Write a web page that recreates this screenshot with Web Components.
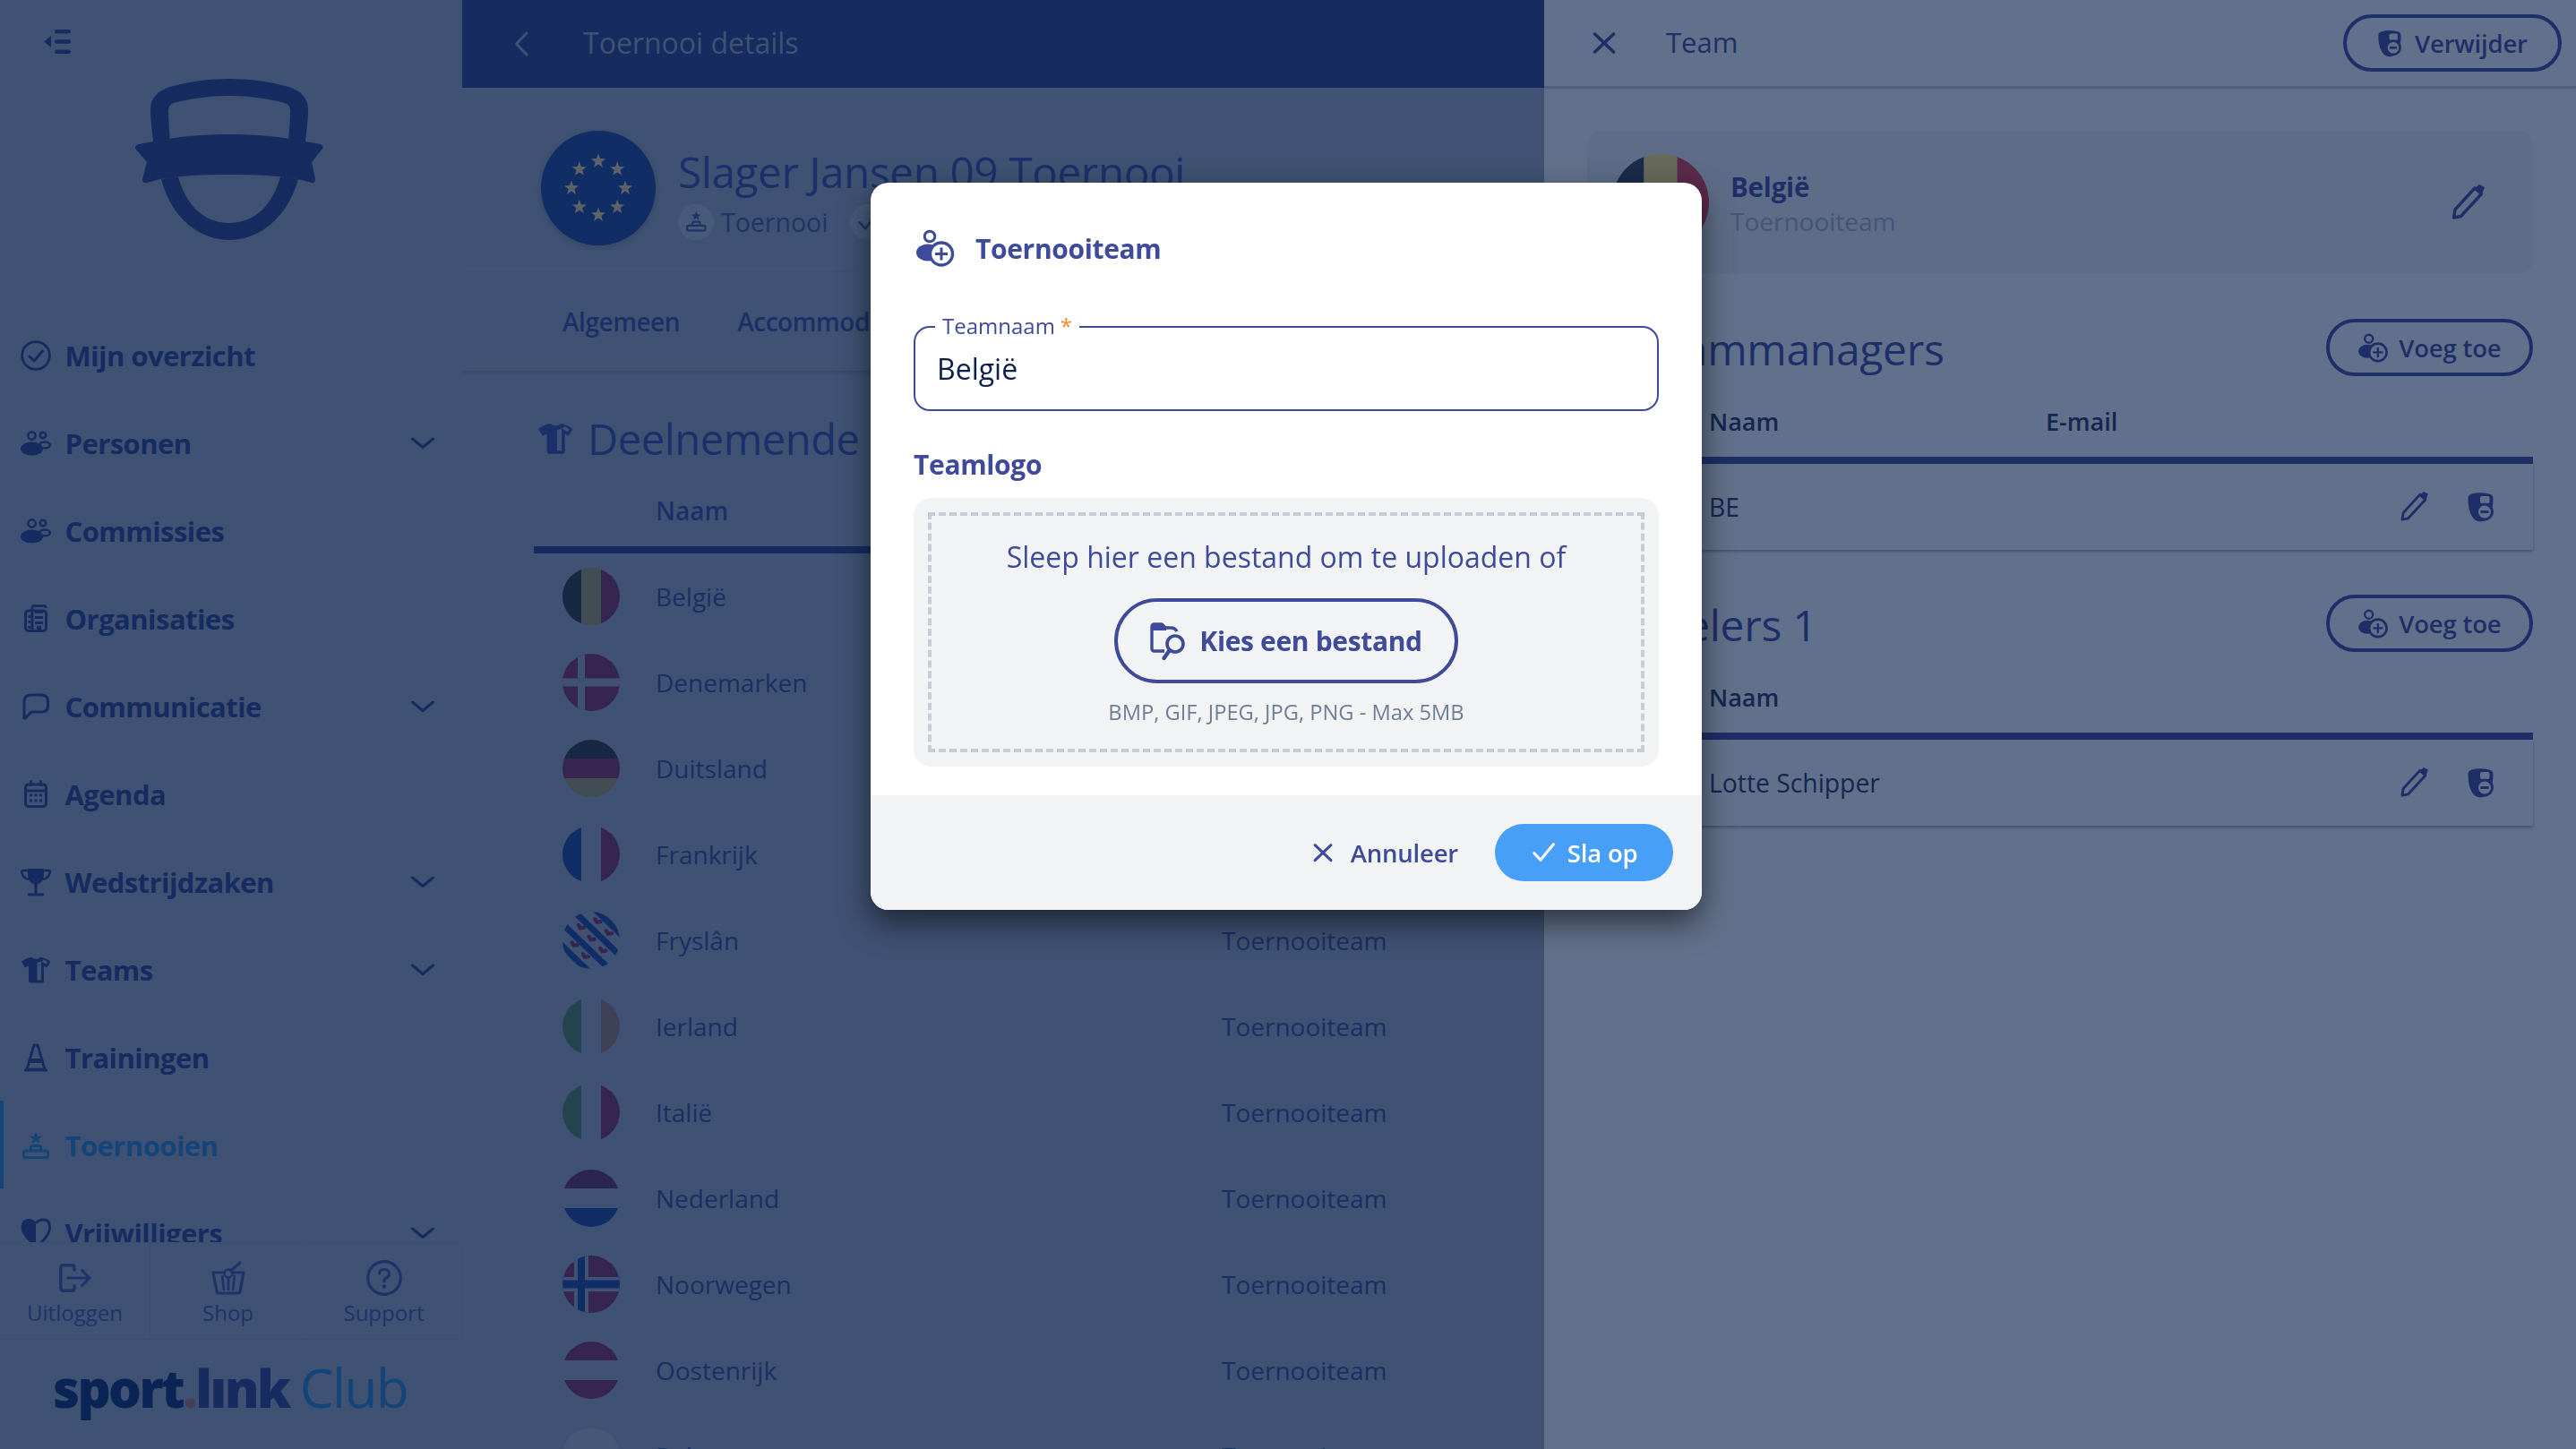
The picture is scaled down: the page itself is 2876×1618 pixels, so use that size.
<!DOCTYPE html>
<html lang="nl"><head><meta charset="utf-8"><title>Sportlink Club</title>
<style>
html,body{margin:0;padding:0;width:2876px;height:1618px;overflow:hidden;background:#3f5273;font-family:"Open Sans","Noto Sans",sans-serif}
</style></head><body>
<app-shell>
  <side-nav slot="nav"></side-nav>
  <tournament-panel slot="main"></tournament-panel>
  <team-panel slot="side"></team-panel>
</app-shell>
<team-modal></team-modal>
<script>
const ICONS={
collapse:[30,27,'<path d="M0 13.5 8 7v13z" fill="currentColor"/><g fill="currentColor"><rect x="12" y="0" width="18" height="4.4" rx="2"/><rect x="12" y="11.3" width="18" height="4.4" rx="2"/><rect x="12" y="22.6" width="18" height="4.4" rx="2"/></g>'],
check:[34,34,'<circle cx="17" cy="17" r="15.4" fill="none" stroke="currentColor" stroke-width="2.8"/><path d="M10 18l5 5 9.500-11" fill="none" stroke="currentColor" stroke-width="3" stroke-linecap="round" stroke-linejoin="round"/>'],
people:[34,28,'<g fill="none" stroke="currentColor" stroke-width="2.400"><circle cx="12.500" cy="5.500" r="4.200"/><circle cx="25" cy="5" r="3.300"/><ellipse cx="27" cy="16" rx="5.800" ry="3.400"/></g><ellipse cx="12.500" cy="20" rx="12.500" ry="7.500" fill="currentColor"/>'],
building:[26,31,'<rect x="1.500" y="7" width="23" height="22.500" rx="3.500" fill="none" stroke="currentColor" stroke-width="3"/><path d="M9 29V3.500Q9 1.500 11 1.500H22Q24 1.500 24 4" fill="none" stroke="currentColor" stroke-width="3"/><g fill="currentColor"><rect x="4.500" y="12" width="3" height="3"/><rect x="4.500" y="18" width="3" height="3"/><rect x="4.500" y="24" width="3" height="3"/><rect x="12" y="7" width="9" height="3"/><rect x="12" y="13" width="9" height="3"/><rect x="12" y="19" width="9" height="3"/><rect x="14" y="24" width="5" height="5"/></g>'],
chat:[30,30,'<path d="M2 28V9.500Q2 2 10 2H21Q28.500 2 28.500 9.500V14.500Q28.500 21 21 21H10L3 28z" fill="none" stroke="currentColor" stroke-width="3" stroke-linejoin="round"/>'],
calendar:[26,31,'<rect x="1.500" y="5" width="23" height="24.500" rx="3.500" fill="none" stroke="currentColor" stroke-width="3"/><path d="M1.500 12H24.500" stroke="currentColor" stroke-width="3"/><g fill="currentColor"><rect x="6" y="0" width="3" height="7" rx="1.500"/><rect x="17" y="0" width="3" height="7" rx="1.500"/><rect x="6" y="15.500" width="3" height="3"/><rect x="11.500" y="15.500" width="3" height="3"/><rect x="17" y="15.500" width="3" height="3"/><rect x="6" y="21.500" width="3" height="3"/><rect x="11.500" y="21.500" width="3" height="3"/><rect x="17" y="21.500" width="3" height="3"/></g>'],
trophy:[34,32,'<path d="M8 1H26V8Q26 17 17 19Q8 17 8 8Z" fill="currentColor"/><path d="M8 3H2Q1 3 1.500 6Q3 12 9.500 13M26 3H32Q33 3 32.500 6Q31 12 24.500 13" fill="none" stroke="currentColor" stroke-width="2.600"/><rect x="15.300" y="18" width="3.400" height="11" fill="currentColor"/><rect x="8" y="28.500" width="18" height="3" rx="1" fill="currentColor"/>'],
shirt:[34,30,'<path fill-rule="evenodd" d="M1 6Q7 1 12.500 1Q17 5 22 1Q27 1 33.500 6L29.500 12.500L26 10.500V27Q26 29.500 24 29.500H11Q9 29.500 9 27V10.500L5 12.500ZM18.500 6.500V26.500H23V6Q25 5 25.500 3.500Q28 4 30 6.500L28.500 8.500L23 5.500Q21 6.500 18.500 6.500Z" fill="currentColor"/>'],
cone:[26,31,'<path d="M0 30H26" stroke="currentColor" stroke-width="2.600"/><path d="M11 2H15L23 29H3Z" fill="none" stroke="currentColor" stroke-width="2.800" stroke-linejoin="round"/><path d="M7 17H19V22H6Z" fill="currentColor"/>'],
podium:[30,30,'<path d="M15 0l2 4.500 4.800.400-3.600 3.200 1.100 4.700L15 10.300l-4.300 2.500 1.100-4.700L8.200 4.900l4.800-.400z" fill="currentColor"/><path d="M9.500 21V17.500Q9.500 15.500 11.500 15.500H18.500Q20.500 15.500 20.500 17.500V21M3.500 21H26.500Q28.500 21 28.500 23V26.500Q28.500 28.500 26.500 28.500H3.500Q1.500 28.500 1.500 26.500V23Q1.500 21 3.500 21Z" fill="none" stroke="currentColor" stroke-width="3"/>'],
heart:[34,34,'<path d="M17 33Q1 20 .500 11Q.500 1 9 1Q14 1 17 5Z" fill="currentColor"/><path d="M17 33Q32.500 20 32.500 11Q33 2 25 2Q20 2 17 6" fill="none" stroke="currentColor" stroke-width="2.800"/>'],
chev:[26,14,'<path d="M1.500 2 13 11.500 24.500 2" fill="none" stroke="currentColor" stroke-width="3" stroke-linecap="round" stroke-linejoin="round"/>'],
logout:[36,32,'<path d="M17 7V4.500Q17 1.700 14 1.700H5Q1.800 1.700 1.800 5V27Q1.800 30.300 5 30.300H14Q17 30.300 17 27.500V25" fill="none" stroke="currentColor" stroke-width="3.400" stroke-linecap="round"/><path d="M10 16H33M25.500 7.500 34 16 25.500 24.500" fill="none" stroke="currentColor" stroke-width="3" stroke-linecap="round" stroke-linejoin="round"/>'],
basket:[38,36,'<path d="M2 12H36L32 33Q31.500 35 29.500 35H8.500Q6.500 35 6 33Z" fill="none" stroke="currentColor" stroke-width="3.200" stroke-linejoin="round"/><path d="M12 15 14 32M19 15V32M26 15 24 32" stroke="currentColor" stroke-width="2.600"/><circle cx="19" cy="13" r="4.500" fill="#3f5273" stroke="currentColor" stroke-width="2.600"/><path d="M21.500 10 32 1" stroke="currentColor" stroke-width="3.400" stroke-linecap="round"/>'],
help:[40,40,'<circle cx="20" cy="20" r="18.300" fill="none" stroke="currentColor" stroke-width="3.200"/><path d="M14.500 15Q15 10.500 20 10.500Q25.500 10.500 25.500 15.500Q25.500 18.500 22 20Q20 21 20 24" fill="none" stroke="currentColor" stroke-width="3.200" stroke-linecap="round"/><circle cx="20" cy="29.500" r="2.200" fill="currentColor"/>'],
back:[16,28,'<path d="M14 2 2.500 14 14 26" fill="none" stroke="currentColor" stroke-width="3" stroke-linecap="round" stroke-linejoin="round"/>'],
close:[26,24,'<path d="M2.500 2 23.500 22M23.500 2 2.500 22" fill="none" stroke="currentColor" stroke-width="3.600" stroke-linecap="round"/>'],
tick:[28,24,'<path d="M2 13 10 21.500 26 2" fill="none" stroke="currentColor" stroke-width="3.400" stroke-linecap="round" stroke-linejoin="round"/>'],
pencil:[40,40,'<path d="M3.500 37 5 28 27 4 34.500 10.500 11.500 35.500Z" fill="none" stroke="currentColor" stroke-width="3.400" stroke-linejoin="round"/><path d="M26 5 32 0 38 3 35 11Z" fill="currentColor"/>'],
add:[42,42,'<circle cx="15" cy="8" r="5.800" fill="none" stroke="currentColor" stroke-width="3"/><ellipse cx="13" cy="26" rx="13" ry="9.500" fill="currentColor"/><circle cx="28" cy="27.500" r="12.500" fill="var(--ib,#fff)" stroke="currentColor" stroke-width="3.400"/><path d="M28 20.500V34.500M21 27.500H35" stroke="currentColor" stroke-width="3"/>'],
del:[32,34,'<path d="M1.500 7.500Q1.500 3.500 5.500 2.500Q15 0 25 2.500Q29.500 3.500 29.500 7.500Q29.500 20 25.500 27Q21.500 33.500 15.500 33.500Q9 33.500 5.500 27Q1.500 20 1.500 7.500Z" fill="currentColor"/><rect x="15" y="5" width="10.500" height="8" rx="2" fill="var(--ib,#62718b)"/><circle cx="20" cy="22.500" r="8.500" fill="var(--ib,#62718b)" stroke="currentColor" stroke-width="3"/><path d="M15.500 22.500H24.500" stroke="currentColor" stroke-width="3"/>'],
folder:[40,42,'<path d="M16 32H5Q2 32 2 29V5Q2 2 5 2H13L17 6H23Q28 6 30 10" fill="none" stroke="currentColor" stroke-width="3.400" stroke-linejoin="round"/><path d="M2 9V4Q2 1 5 1H14L18 5V9Z" fill="currentColor"/><circle cx="28" cy="24" r="9" fill="none" stroke="currentColor" stroke-width="3.600"/><path d="M21.500 31.500 15.500 40" stroke="currentColor" stroke-width="4.400" stroke-linecap="round"/>'],
shieldlogo:[212,181,'<g fill="currentColor" transform="translate(-150 -88)"><path d="M171 158C169 140 168 130 168 122C168 110 176 101 190 97C210 91 235 88 256 88C277 88 302 91 322 97C336 101 344 110 344 122C344 130 343 140 341 158L322 158C323 145 324 135 324 124C324 119 322 117 318 115C300 110 278 107 256 107C234 107 212 110 194 115C190 117 188 119 188 124C188 135 189 145 190 158Z"/><path d="M155 161L171 158C200 152 230 150 256 150C282 150 312 152 341 158L358 161Q362 163 360 166L348 181L352 200Q352 205 348 204L333 200C310 196 285 195 256 195C227 195 202 196 179 200L164 204Q159 205 159 200L164 181L152 167Q149 163 155 161Z"/><path d="M180 200C190 240 220 268 256 268C292 268 322 240 333 200L313 197C305 228 285 249 256 249C227 249 207 228 199 197Z"/></g>']
};
class UiIcon extends HTMLElement{
  connectedCallback(){
    const [w,h,body]=ICONS[this.getAttribute('name')];
    const s=parseFloat(this.getAttribute('scale')||1);
    this.attachShadow({mode:'open'}).innerHTML=`<style>:host{display:inline-flex;flex:none;line-height:0}svg{display:block;overflow:visible}</style><svg width="${w*s}" height="${h*s}" viewBox="0 0 ${w} ${h}">${body}</svg>`;
  }
}
customElements.define('ui-icon',UiIcon);

const D={k:'#162843',y:'#414d52',r:'#36264f',b:'#102d66',w:'#3f5273',g:'#23434f',o:'#3f4256'};
const B={k:'#1b2b4a',y:'#676a5a',r:'#5a2a4a'};
const v3=(a,b,c)=>`<rect width="21" height="64" fill="${a}"/><rect x="21" width="22" height="64" fill="${b}"/><rect x="43" width="21" height="64" fill="${c}"/>`;
const h3=(a,b,c)=>`<rect width="64" height="21" fill="${a}"/><rect y="21" width="64" height="22" fill="${b}"/><rect y="43" width="64" height="21" fill="${c}"/>`;
const heart=(x,y)=>`<path transform="translate(${x} ${y}) rotate(25)" d="M0 3.500C-2.500 1-5.500 1-5.500-1.500C-5.500-4-1.500-4 0-1.500C1.500-4 5.500-4 5.500-1.500C5.500 1 2.500 1 0 3.500Z" fill="${D.r}"/>`;
const band=o=>`<rect x="-30" y="${32+o-3.5}" width="124" height="7" fill="${D.b}"/>`;
const FLAGS={
 be:v3(D.k,D.y,D.r), bebig:v3(B.k,B.y,B.r),
 dk:`<rect width="64" height="64" fill="${D.r}"/><rect x="17" width="8" height="64" fill="${D.w}"/><rect y="27.500" width="64" height="9" fill="${D.w}"/>`,
 de:h3(D.k,D.r,D.y), fr:v3(D.b,D.w,D.r),
 fy:`<rect width="64" height="64" fill="${D.w}"/><g transform="rotate(44 32 32)">${band(-28)}${band(-10)}${band(9)}${band(27)}</g>${heart(38.7,11)}${heart(51.3,24)}${heart(20.3,17.5)}${heart(32,30.5)}${heart(44.7,43.5)}${heart(13,37)}${heart(25.3,50)}`,
 ie:v3(D.g,D.w,D.o), it:v3(D.g,D.w,D.r), nl:h3('#2b2550',D.w,D.b),
 no:`<rect width="64" height="64" fill="${D.r}"/><rect x="13" width="16" height="64" fill="${D.w}"/><rect y="24" width="64" height="16" fill="${D.w}"/><rect x="17" width="8" height="64" fill="${D.b}"/><rect y="27.500" width="64" height="9" fill="${D.b}"/>`,
 at:h3(D.r,D.w,D.r),
 pl:`<rect width="64" height="64" fill="#455878"/>`
};
class FlagDot extends HTMLElement{
  connectedCallback(){
    const sz=this.getAttribute('size')||64;
    this.attachShadow({mode:'open'}).innerHTML=`<style>:host{display:block;flex:none;width:${sz}px;height:${sz}px;border-radius:50%;overflow:hidden}svg{display:block}</style><svg width="${sz}" height="${sz}" viewBox="0 0 64 64">${FLAGS[this.getAttribute('code')]}</svg>`;
  }
}
customElements.define('flag-dot',FlagDot);

class EuDisc extends HTMLElement{
  connectedCallback(){
    let s='';
    for(let i=0;i<8;i++){
      const a=i*Math.PI/4,cx=64+30*Math.sin(a),cy=64-30*Math.cos(a);let p=[];
      for(let k=0;k<10;k++){const r=k%2?3.600:8.500,t=k*Math.PI/5;p.push((cx+r*Math.sin(t)).toFixed(1)+','+(cy-r*Math.cos(t)).toFixed(1));}
      s+=`<polygon points="${p.join(' ')}" fill="#5c6368"/>`;
    }
    this.attachShadow({mode:'open'}).innerHTML=`<style>:host{display:block;flex:none;width:128px;height:128px;border-radius:50%;background:#102d66;box-shadow:0 2px 6px rgba(0,0,0,.15)}svg{display:block}</style><svg width="128" height="128" viewBox="0 0 128 128">${s}</svg>`;
  }
}
customElements.define('eu-disc',EuDisc);

class AppShell extends HTMLElement{
  constructor(){super();this.attachShadow({mode:'open'}).innerHTML=`<style>:host{display:grid;grid-template-columns:516px 1208px 1152px;width:2876px;height:1618px;overflow:hidden}</style><slot name="nav"></slot><slot name="main"></slot><slot name="side"></slot>`;}
}
customElements.define('app-shell',AppShell);

class NavItem extends HTMLElement{
  connectedCallback(){
    const i=this.getAttribute('icon'),ch=this.hasAttribute('more'),act=this.hasAttribute('active');
    this.attachShadow({mode:'open'}).innerHTML=`<style>
    :host{display:flex;align-items:center;height:97px;border-bottom:1px solid #3d5071;position:relative;color:${act?'#154479':'#162c60'};font:700 31px "Open Sans",sans-serif;letter-spacing:-.55px}
    .ic{width:34px;margin-left:23px;margin-right:15.500px;display:flex;justify-content:center}
    .t{flex:1;white-space:nowrap}
    .c{margin-right:31px;color:#162c60;display:flex}
    ${act?'.bar{position:absolute;left:0;top:-1px;bottom:0;width:4px;background:#154479}':''}
    </style>${act?'<i class="bar"></i>':''}<span class="ic"><ui-icon name="${i}"></ui-icon></span><span class="t"><slot></slot></span>${ch?'<span class="c"><ui-icon name="chev"></ui-icon></span>':''}`;
  }
}
customElements.define('nav-item',NavItem);

class FootLink extends HTMLElement{
  connectedCallback(){
    this.attachShadow({mode:'open'}).innerHTML=`<style>:host{display:flex;flex-direction:column;align-items:center;justify-content:center;color:#1e3468;border-right:1px solid #3c4f70;font:400 24px/30px "Open Sans",sans-serif;height:107px;gap:4px;box-sizing:border-box;padding-top:4px}.i{height:40px;display:flex;align-items:center}</style><span class="i"><ui-icon name="${this.getAttribute('icon')}"></ui-icon></span><slot></slot>`;
  }
}
customElements.define('foot-link',FootLink);

class SideNav extends HTMLElement{
  constructor(){super();this.attachShadow({mode:'open'}).innerHTML=`<style>
  :host{display:flex;flex-direction:column;height:1618px;background:#3f5273;color:#162c60;overflow:hidden}
  .top{height:348px;border-bottom:1px solid #3d5071;box-sizing:border-box;position:relative;display:flex;flex-direction:column;flex:none}
  .tg{padding:33px 0 0 49px;height:55px;color:#162c60;box-sizing:content-box;display:block;line-height:0}
  .lg{display:flex;justify-content:center;color:#162c60;margin-left:-4px}
  nav{flex:1;overflow:hidden;min-height:0}
  .foot{display:grid;grid-template-columns:168px 174px 174px;border-top:1px solid #3c4f70;border-bottom:1px solid #3c4f70;flex:none;height:107px}
  .brand{height:122px;display:flex;align-items:flex-start;padding:25px 0 0 59px;box-sizing:border-box;font:800 58px/1 "Open Sans",sans-serif;letter-spacing:-2.600px;flex:none;white-space:nowrap}
  .s{color:#0a2555}.d{color:#44405a}.l{color:#162c60}
  .c{color:#154479;font-weight:400;font-size:60px;line-height:58px;letter-spacing:-1.500px;margin-left:12px;margin-top:-1px}
  </style>
  <div class="top"><span class="tg"><ui-icon name="collapse"></ui-icon></span><div class="lg"><ui-icon name="shieldlogo"></ui-icon></div></div>
  <nav>
   <nav-item icon="check">Mijn overzicht</nav-item>
   <nav-item icon="people" more>Personen</nav-item>
   <nav-item icon="people">Commissies</nav-item>
   <nav-item icon="building">Organisaties</nav-item>
   <nav-item icon="chat" more>Communicatie</nav-item>
   <nav-item icon="calendar">Agenda</nav-item>
   <nav-item icon="trophy" more>Wedstrijdzaken</nav-item>
   <nav-item icon="shirt" more>Teams</nav-item>
   <nav-item icon="cone">Trainingen</nav-item>
   <nav-item icon="podium" active>Toernooien</nav-item>
   <nav-item icon="heart" more>Vrijwilligers</nav-item>
  </nav>
  <div class="foot"><foot-link icon="logout">Uitloggen</foot-link><foot-link icon="basket">Shop</foot-link><foot-link icon="help">Support</foot-link></div>
  <div class="brand"><span class="s">sport</span><span class="d">.</span><span class="l">lınk</span><span class="c">Club</span></div>`;}
}
customElements.define('side-nav',SideNav);

class TeamRow extends HTMLElement{
  connectedCallback(){
    this.attachShadow({mode:'open'}).innerHTML=`<style>:host{display:flex;align-items:center;height:96px;flex:none;color:#1a2f62;font:400 28px "Open Sans",sans-serif}
    flag-dot{margin-left:32px}.n{width:632px;margin-left:40px}</style>
    <flag-dot code="${this.getAttribute('flag')}"></flag-dot><span class="n"><slot></slot></span><span>Toernooiteam</span>`;
  }
}
customElements.define('team-row',TeamRow);

class TournamentPanel extends HTMLElement{
  constructor(){super();this.attachShadow({mode:'open'}).innerHTML=`<style>
  :host{display:flex;flex-direction:column;height:1618px;overflow:hidden;background:#3f5273;color:#1b3068}
  header{height:98px;box-sizing:border-box;padding-bottom:3px;background:#162c60;color:#3f5273;display:flex;align-items:center;flex:none;font:400 32px "Open Sans",sans-serif}
  header ui-icon{margin:3px 61px 0 58px}
  .hero{height:206px;padding:48px 0 0 88px;box-sizing:border-box;display:flex;gap:25px;flex:none}
  h1{font:400 47.500px/1 "Open Sans",sans-serif;margin:22px 0 0;white-space:nowrap;letter-spacing:-.3px}
  .sub{display:flex;align-items:center;gap:8px;margin-top:12px;font:400 28.500px "Open Sans",sans-serif;color:#1f3565}
  .bub{width:40px;height:40px;border-radius:50%;background:#475a7a;display:flex;align-items:center;justify-content:center;color:#1f3565}
  .sub .bub+span+.bub{margin-left:17px}
  .tabs{height:110px;box-sizing:border-box;padding:0 0 0 112px;display:flex;align-items:center;gap:64px;font:600 28px "Open Sans",sans-serif;letter-spacing:-.45px;box-shadow:0 2px 4px rgba(0,0,0,.14);flex:none;white-space:nowrap;overflow:hidden}
  .title{display:flex;align-items:center;gap:16px;padding:48px 0 0 84px;font:400 47px/56px "Open Sans",sans-serif;flex:none;white-space:nowrap;letter-spacing:-.4px}
  .thead{margin:0 28px 0 80px;height:100px;box-sizing:border-box;display:flex;align-items:center;border-bottom:8px solid #162c60;font:600 28px "Open Sans",sans-serif;flex:none;padding-top:12px}
  .thead span:first-child{margin-left:136px;width:632px}
  .rows{margin:0 28px 0 80px;display:flex;flex-direction:column;flex:none}
  </style>
  <header><ui-icon name="back"></ui-icon>Toernooi details</header>
  <div class="hero"><eu-disc></eu-disc><div><h1>Slager Jansen 09 Toernooi</h1><div class="sub"><span class="bub"><ui-icon name="podium" scale=".75"></ui-icon></span><span>Toernooi</span><span class="bub"><ui-icon name="tick" scale=".8"></ui-icon></span></div></div></div>
  <div class="tabs"><span>Algemeen</span><span>Accommodaties</span></div>
  <div class="title"><ui-icon name="shirt" scale="1.180"></ui-icon><span>Deelnemende teams</span></div>
  <div class="thead"><span>Naam</span><span>Type</span></div>
  <div class="rows">
   <team-row flag="be">België</team-row><team-row flag="dk">Denemarken</team-row><team-row flag="de">Duitsland</team-row><team-row flag="fr">Frankrijk</team-row><team-row flag="fy">Fryslân</team-row><team-row flag="ie">Ierland</team-row><team-row flag="it">Italië</team-row><team-row flag="nl">Nederland</team-row><team-row flag="no">Noorwegen</team-row><team-row flag="at">Oostenrijk</team-row><team-row flag="pl">Polen</team-row>
  </div>`;}
}
customElements.define('tournament-panel',TournamentPanel);

class PillButton extends HTMLElement{
  connectedCallback(){
    this.attachShadow({mode:'open'}).innerHTML=`<style>:host{display:inline-flex;align-items:center;justify-content:center;height:64px;box-sizing:border-box;border:4px solid #1e2f68;border-radius:32px;color:#1e2f68;font:600 27.500px "Open Sans",sans-serif;letter-spacing:-.2px;gap:13px;--ib:#62718b;flex:none;white-space:nowrap}</style><ui-icon name="${this.getAttribute('icon')}" scale="${this.getAttribute('scale')||1}"></ui-icon><slot></slot>`;
  }
}
customElements.define('pill-button',PillButton);

class MemberTable extends HTMLElement{
  connectedCallback(){
    const email=this.hasAttribute('email');
    this.attachShadow({mode:'open'}).innerHTML=`<style>
    :host{display:block;color:#1e2f68;margin-top:50px}
    .h{display:flex;justify-content:space-between;align-items:center;height:64px}
    h2{margin:2px 0 0 55px;font:400 48px "Open Sans",sans-serif;letter-spacing:-.3px;white-space:nowrap}
    .th{border-bottom:8px solid #1e2f68;display:flex;align-items:center;font:600 27px "Open Sans",sans-serif;color:#15264f;box-sizing:border-box;height:98px;padding:10px 0 0 136px}
    .th b{font-weight:600;width:376px}
    .r{height:96px;display:flex;align-items:center;padding-left:136px;font:400 28.300px "Open Sans",sans-serif;color:#15264f;box-shadow:0 2px 3px rgba(15,25,60,.35);--ib:#62718b}
    .r span{flex:1}.r ui-icon{color:#1e2f68}
    .p{margin-right:41px}.x{margin-right:42px}
    </style>
    <div class="h"><h2>${this.getAttribute('title')}</h2><pill-button icon="add" scale=".78" style="width:231px">Voeg toe</pill-button></div>
    <div class="th"><b>Naam</b>${email?'<b>E-mail</b>':''}</div>
    <div class="r"><span><slot></slot></span><ui-icon class="p" name="pencil" scale=".84"></ui-icon><ui-icon class="x" name="del"></ui-icon></div>`;
  }
}
customElements.define('member-table',MemberTable);

class TeamPanel extends HTMLElement{
  constructor(){super();this.attachShadow({mode:'open'}).innerHTML=`<style>
  :host{display:flex;flex-direction:column;height:1618px;overflow:hidden;background:#62718b;color:#1e2f68}
  header{height:98px;box-sizing:border-box;display:flex;align-items:center;border-bottom:2px solid #4f5f80;flex:none;font:400 31px "Open Sans",sans-serif;box-shadow:0 1px 2px rgba(20,30,70,.3);padding-right:16px}
  header .x{margin:0 56px 0 54px}header .t{flex:1;margin-top:-2px}
  .b{padding:48px 48px 0;display:flex;flex-direction:column}
  .card{height:160px;background:#5d6c87;border-radius:16px;display:flex;align-items:center;padding:0 52px 0 28px;overflow:hidden}
  .card flag-dot{margin-right:24px}
  .inf{flex:1;padding-top:3px}.n{font:700 29.500px/38px "Open Sans",sans-serif;letter-spacing:-.2px}.s{font:400 28px/38px "Open Sans",sans-serif;color:#44557a}
  </style>
  <header><ui-icon class="x" name="close"></ui-icon><span class="t">Team</span><pill-button icon="del" scale=".9" style="width:244px">Verwijder</pill-button></header>
  <div class="b">
   <div class="card"><flag-dot code="bebig" size="108"></flag-dot><div class="inf"><div class="n">België</div><div class="s">Toernooiteam</div></div><ui-icon name="pencil" scale="1"></ui-icon></div>
   <member-table title="Teammanagers" email>BE</member-table>
   <member-table title="Spelers 1">Lotte Schipper</member-table>
  </div>`;}
}
customElements.define('team-panel',TeamPanel);

class TeamModal extends HTMLElement{
  constructor(){super();this.attachShadow({mode:'open'}).innerHTML=`<style>
  :host{position:fixed;left:972px;top:204px;width:928px;height:812px;background:#fff;border-radius:20px;box-shadow:0 14px 34px rgba(0,0,0,.55);display:flex;flex-direction:column;overflow:visible;color:#3f4b9a;--ib:#fff}
  .body{flex:1;padding:52px 48px 0;display:flex;flex-direction:column}
  .ttl{display:flex;align-items:center;gap:24px;height:42px;padding-left:3px;font:700 30px "Open Sans",sans-serif;letter-spacing:-.35px}
  .fld{position:relative;margin-top:66px;height:95px;box-sizing:border-box;border:2px solid #3f4b9a;border-radius:18px;display:flex;align-items:center;padding-left:24px;font:400 32px "Open Sans",sans-serif;color:#0f1f4b}
  .lab{position:absolute;left:22px;top:-17px;background:#fff;padding:0 8px;font:400 24px/30px "Open Sans",sans-serif;color:#3f4b9a}
  .lab i{color:#f08a24;font-style:normal;margin-left:6px}
  .sec{margin-top:39px;font:700 30px/42px "Open Sans",sans-serif;letter-spacing:-.35px}
  .dz{margin-top:16px;height:300px;border-radius:20px;background:#f2f3f5;padding:16px;box-sizing:border-box;display:flex}
  .dash{flex:1;border:4px dashed #c9ccd6;display:flex;flex-direction:column;align-items:center;box-sizing:border-box}
  .p1{margin-top:24px;font:400 32px/44px "Open Sans",sans-serif}
  .kies{margin-top:24px;width:384px;height:95px;box-sizing:border-box;border:4px solid #3f4b9a;border-radius:48px;display:flex;align-items:center;justify-content:center;gap:15px;font:700 30px "Open Sans",sans-serif;letter-spacing:-.35px}
  .p2{margin-top:15px;font:400 23.700px/34px "Open Sans",sans-serif;color:#6f7d97}
  footer{height:128px;background:#f2f3f5;border-radius:0 0 20px 20px;display:flex;align-items:center;justify-content:flex-end;padding-right:32px;box-sizing:border-box;font:600 27.500px "Open Sans",sans-serif;letter-spacing:-.2px}
  .an{display:flex;align-items:center;gap:20px;margin-right:41px}
  .ok{width:199px;height:64px;border-radius:32px;background:#489ff8;color:#fff;display:flex;align-items:center;justify-content:center;gap:14px;padding-left:2px;box-sizing:border-box}
  </style>
  <div class="body">
   <div class="ttl"><ui-icon name="add"></ui-icon><span>Toernooiteam</span></div>
   <div class="fld"><span class="lab">Teamnaam<i>*</i></span>België</div>
   <div class="sec">Teamlogo</div>
   <div class="dz"><div class="dash"><div class="p1">Sleep hier een bestand om te uploaden of</div><div class="kies"><ui-icon name="folder"></ui-icon><span>Kies een bestand</span></div><div class="p2">BMP, GIF, JPEG, JPG, PNG - Max 5MB</div></div></div>
  </div>
  <footer><div class="an"><ui-icon name="close" scale=".85"></ui-icon><span>Annuleer</span></div><div class="ok"><ui-icon name="tick" scale=".9"></ui-icon><span>Sla op</span></div></footer>`;}
}
customElements.define('team-modal',TeamModal);
</script>
</body></html>
